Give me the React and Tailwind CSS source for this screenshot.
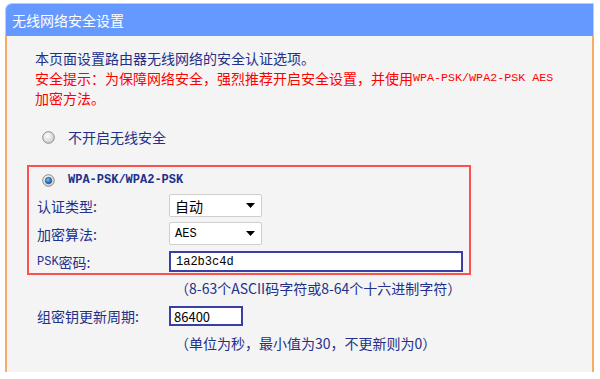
function Radio({ checked }) {
  return (
    <svg width="13" height="13" viewBox="0 0 13 13" className="shrink-0">
      <defs>
        <radialGradient id={checked ? "rc" : "ru"} cx="40%" cy="35%" r="70%">
          <stop offset="0%" stopColor="#ffffff" />
          <stop offset="100%" stopColor="#c9c9c9" />
        </radialGradient>
        <radialGradient id="dot" cx="40%" cy="35%" r="70%">
          <stop offset="0%" stopColor="#6fc3ff" />
          <stop offset="100%" stopColor="#0b4f9c" />
        </radialGradient>
      </defs>
      <circle cx="6.5" cy="6.5" r="5.8" fill={`url(#${checked ? "rc" : "ru"})`} stroke="#8c8c8c" strokeWidth="1" />
      {checked && <circle cx="6.5" cy="6.5" r="3.2" fill="url(#dot)" stroke="#1d3a6a" strokeWidth="0.6" />}
    </svg>
  );
}

function Select({ value, mono }) {
  return (
    <div className="w-[93px] h-[23px] bg-white border border-[#cfcfcf] rounded-[2px] flex items-center justify-between pl-[5px] pr-[6px]">
      <span className={mono ? "font-['Liberation_Mono',monospace] text-[12px] leading-none text-black" : "text-[14px] leading-none text-black"}>
        {value}
      </span>
      <svg width="9" height="5" viewBox="0 0 9 5">
        <path d="M0 0 H9 L4.5 5 Z" fill="#000" />
      </svg>
    </div>
  );
}

export default function App() {
  const navy = "text-[#23308a]";
  const line = "h-[20px] flex items-center whitespace-nowrap";
  return (
    <div className="w-[600px] h-[379px] bg-white pt-[3px] pl-[5px] font-['Noto_Sans_CJK_SC','Noto_Sans',sans-serif]">
      <div className="w-[589px]">
        {/* title bar */}
        <div className="h-[33px] bg-[#6699ff] rounded-tl-[7px] border border-[#b9ccff] border-b-0 flex items-center pl-[6px]">
          <span className="text-white text-[14px] leading-none">无线网络安全设置</span>
        </div>

        {/* body */}
        <div className="bg-[#f4f4f4] border-l-2 border-r-2 border-[#f7ac63] pl-[20px] pt-[12px] pb-[19px] text-[14px] leading-none">
          <div className="ml-[8px]">
            <div className={`${line} ${navy}`}>本页面设置路由器无线网络的安全认证选项。</div>
            <div className={`${line} text-[#ff0000]`}>
              安全提示：为保障网络安全，强烈推荐开启安全设置，并使用
              <span className="font-['Liberation_Mono',monospace] text-[11.7px] pt-[1px]">WPA-PSK/WPA2-PSK AES</span>
            </div>
            <div className={`${line} text-[#ff0000]`}>加密方法。</div>
          </div>

          <div className="ml-[15px] mt-[19px] h-[20px] flex items-center gap-[13px]">
            <Radio />
            <span className={navy}>不开启无线安全</span>
          </div>

          {/* WPA block */}
          <div className="mt-[18px] w-[444px] border-2 border-[#ff5050] pt-[3px] pb-[1px] pl-[8px]">
            <div className="ml-[5px] h-[20px] flex items-center gap-[13px]">
              <Radio checked />
              <span className={`${navy} font-['Liberation_Mono',monospace] text-[12px] font-bold`}>WPA-PSK/WPA2-PSK</span>
            </div>
            <div className="mt-[4px] h-[23px] flex items-center">
              <span className={`${navy} w-[132px]`}>认证类型:</span>
              <Select value="自动" />
            </div>
            <div className="mt-[5px] h-[23px] flex items-center">
              <span className={`${navy} w-[132px]`}>加密算法:</span>
              <Select value="AES" mono />
            </div>
            <div className="mt-[6px] h-[21px] flex items-center">
              <span className={`${navy} w-[132px] flex items-center`}>
                <span className="font-['Liberation_Mono',monospace] text-[12px]">PSK</span>密码:
              </span>
              <div className="w-[294px] h-[21px] bg-white border-2 border-[#3a3fa8] flex items-center pl-[5px]">
                <span className="font-['Liberation_Mono',monospace] text-[12px] text-black">1a2b3c4d</span>
              </div>
            </div>
          </div>

          <div className={`${line} ${navy} ml-[148px] mt-[3px]`}>（8-63个ASCII码字符或8-64个十六进制字符）</div>

          <div className="mt-[8px] ml-[10px] h-[20px] flex items-center">
            <span className={`${navy} w-[132px]`}>组密钥更新周期:</span>
            <div className="w-[74px] h-[20px] bg-white border-2 border-[#3a3fa8] flex items-center pl-[3px]">
              <span className="text-[13px] text-black">86400</span>
            </div>
          </div>

          <div className={`${line} ${navy} ml-[148px] mt-[7px]`}>（单位为秒，最小值为30，不更新则为0）</div>
        </div>
      </div>
    </div>
  );
}
